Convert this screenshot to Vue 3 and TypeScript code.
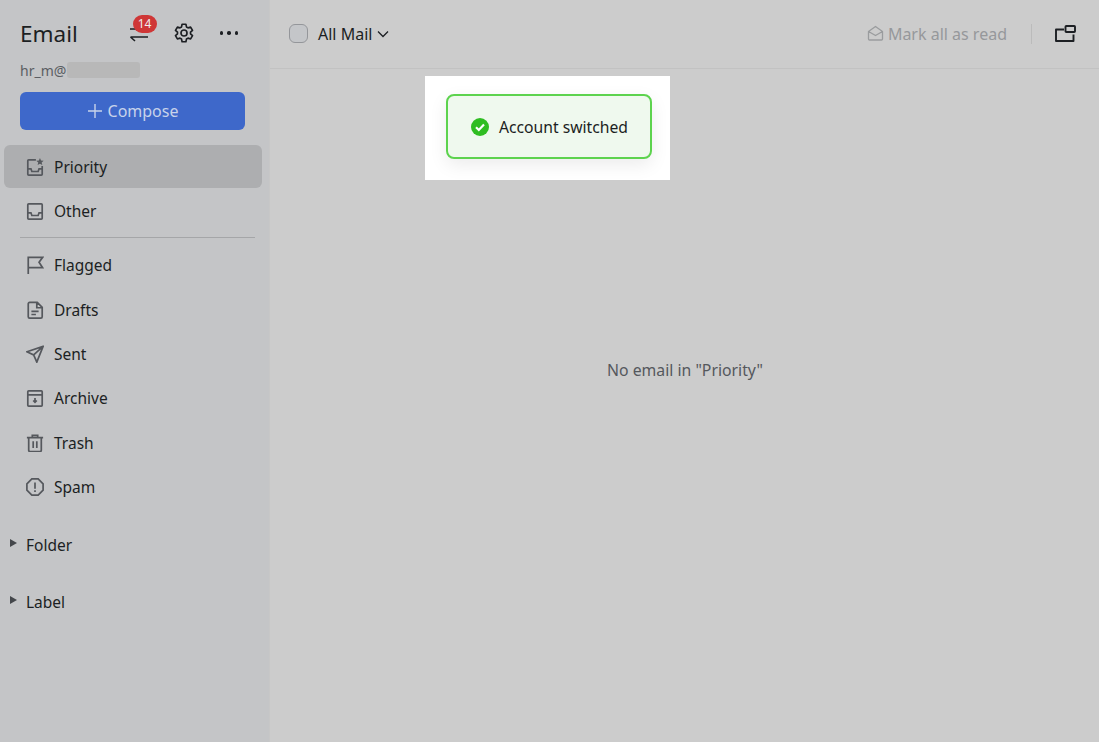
<script setup lang="ts">
const top = [
  { label: 'Priority', icon: 'priority', active: true },
  { label: 'Other', icon: 'inbox', active: false },
]
const rest = [
  { label: 'Flagged', icon: 'flag' },
  { label: 'Drafts', icon: 'draft' },
  { label: 'Sent', icon: 'sent' },
  { label: 'Archive', icon: 'archive' },
  { label: 'Trash', icon: 'trash' },
  { label: 'Spam', icon: 'spam' },
]
const paths: Record<string, string> = {
  priority: 'M11 2H3a1 1 0 0 0-1 1v15a1 1 0 0 0 1 1h14a1 1 0 0 0 1-1V9M2 12h3.500l1 3h7l1-3H18',
  inbox: 'M3 2h14a1 1 0 0 1 1 1v15a1 1 0 0 1-1 1H3a1 1 0 0 1-1-1V3a1 1 0 0 1 1-1zM2 12h3.500l1 3h7l1-3H18',
  flag: 'M2.500 20V1.500h16l-4 5.500 4 6H2.500',
  draft: 'M4 1.500h8.500L18 7v10.500a1.500 1.500 0 0 1-1.500 1.500H4a1.500 1.500 0 0 1-1.500-1.500V3A1.500 1.500 0 0 1 4 1.500zM12 1.500V7.500h6M6 11.500h8M6 15h5',
  sent: 'M19 1.500 1 7.500l7.500 3.500 3.500 8zM19 1.500 8.500 11',
  archive: 'M3 2h14a1 1 0 0 1 1 1v15a1 1 0 0 1-1 1H3a1 1 0 0 1-1-1V3a1 1 0 0 1 1-1zM2 6.500h16M10 10v4.500M8 12.800l2 2 2-2',
  trash: 'M7 3.500V1.500h6v2M1 4h18M3 4v14a1.500 1.500 0 0 0 1.500 1.500h11A1.500 1.500 0 0 0 17 18V4M8 8v7.500M12 8v7.500',
  spam: 'M6.500 1h7L19 6.500v7L13.500 19h-7L1 13.500v-7zM10 5v7M10 13.500V15.500',
}
</script>

<template>
  <div class="app">
    <aside class="sidebar">
      <header class="brand">
        <h1 class="title">Email</h1>
        <div class="tools">
          <span class="switch">
            <svg width="22" height="22" viewBox="0 0 22 22" fill="none" stroke="#1c1f23" stroke-width="1.600">
              <path d="M1 7h18M19 15H1.500M1.500 15l4.500 4" />
            </svg>
            <span class="badge">14</span>
          </span>
          <svg class="gear" width="22" height="22" viewBox="0 0 24 24" fill="none" stroke="#1c1f23" stroke-width="1.800" stroke-linejoin="round">
            <circle cx="12" cy="12" r="3.300" />
            <path d="M9.900 2.500h4.200l.6 2.900 1.700 1 2.800-.9 2.100 3.600-2.200 2 0 1.800 2.200 2-2.100 3.600-2.800-.9-1.700 1-.6 2.900H9.900l-.6-2.900-1.700-1-2.800.9-2.100-3.600 2.200-2 0-1.800-2.200-2 2.100-3.600 2.800.9 1.700-1z" />
          </svg>
          <span class="dots"><i></i><i></i><i></i></span>
        </div>
      </header>
      <div class="account">
        <span>hr_m@</span><span class="masked"></span>
      </div>
      <div class="compose-wrap">
        <button class="compose">
          <svg width="16" height="16" viewBox="0 0 16 16" stroke="currentColor" stroke-width="1.400"><path d="M8 1v14M1 8h14" /></svg>
          <span>Compose</span>
        </button>
      </div>
      <nav class="nav first">
        <a v-for="item in top" :key="item.label" class="item" :class="{ active: item.active }">
          <svg class="icon" viewBox="0 0 20 20" fill="none">
            <path :d="paths[item.icon]" />
            <path v-if="item.icon === 'priority'" class="star" d="M15.500 0l1.200 2.700 2.900.3-2.200 1.900.7 2.900-2.600-1.500-2.600 1.500.7-2.900L11.400 3l2.900-.3z" />
          </svg>
          <span>{{ item.label }}</span>
        </a>
      </nav>
      <div class="rule"></div>
      <nav class="nav second">
        <a v-for="item in rest" :key="item.label" class="item">
          <svg class="icon" viewBox="0 0 20 20" fill="none"><path :d="paths[item.icon]" /></svg>
          <span>{{ item.label }}</span>
        </a>
      </nav>
      <div class="groups">
        <div class="group"><span class="caret"></span><span>Folder</span></div>
        <div class="group"><span class="caret"></span><span>Label</span></div>
      </div>
    </aside>

    <main class="main">
      <header class="toolbar">
        <span class="check"></span>
        <span class="filter">All Mail</span>
        <svg class="chev" width="12" height="8" viewBox="0 0 12 8" fill="none" stroke="#1c1f23" stroke-width="1.300"><path d="M1 1.500l5 5 5-5" /></svg>
        <div class="spacer"></div>
        <span class="mark">
          <svg width="17" height="17" viewBox="0 0 17 17" fill="none" stroke="#9a9c9e" stroke-width="1.300" stroke-linejoin="round">
            <path d="M1.500 6.500 8.500 1.500l7 5v7.500a1 1 0 0 1-1 1h-12a1 1 0 0 1-1-1zM1.500 6.500l7 4 7-4" />
          </svg>
          <span>Mark all as read</span>
        </span>
        <span class="sep"></span>
        <svg class="win" width="21" height="17" viewBox="0 0 21 17" fill="none" stroke="#1c1f23" stroke-width="1.900" stroke-linejoin="round">
          <path d="M9 4.500H1v11.500h17.500V9.500" />
          <rect x="10.500" y="1" width="9.500" height="6" rx=".8" />
        </svg>
      </header>
      <div class="empty">No email in "Priority"</div>
    </main>

    <div class="toast-box">
      <div class="toast">
        <svg width="18" height="18" viewBox="0 0 18 18">
          <circle cx="9" cy="9" r="9" fill="#2fbd22" />
          <path d="M5 9.300l2.800 2.700L13 6.600" fill="none" stroke="#fff" stroke-width="2.200" />
        </svg>
        <span>Account switched</span>
      </div>
    </div>
  </div>
</template>

<style>
html, body { margin: 0; padding: 0; }
</style>

<style scoped>
.app {
  position: relative;
  display: flex;
  width: 1099px;
  height: 742px;
  overflow: hidden;
  background: #cccccc;
  color: #1c1f23;
  font-family: "Noto Sans", "Open Sans", sans-serif;
  font-size: 16px;
}
.sidebar {
  flex: 0 0 270px;
  background: #c4c5c7;
  border-right: 1px solid #c7c7c7;
  box-sizing: border-box;
}
.brand {
  display: flex;
  align-items: center;
  justify-content: space-between;
  height: 28px;
  margin-top: 20px;
  padding: 0 31px 0 20px;
}
.title {
  margin: 0;
  font-size: 22.500px;
  font-weight: 400;
  line-height: 28px;
}
.tools { display: flex; align-items: center; gap: 24px; margin-top: -2px; }
.switch { position: relative; display: block; width: 22px; height: 22px; }
.switch svg { display: block; }
.badge {
  position: absolute;
  left: 4px;
  top: -7px;
  width: 24px;
  height: 18px;
  border-radius: 9px;
  background: #cf3737;
  color: #eee;
  font-size: 12px;
  line-height: 18px;
  text-align: center;
}
.gear { display: block; margin-left: -2px; }
.dots { display: flex; gap: 4px; margin-left: 1px; }
.dots i { width: 3.500px; height: 3.500px; border-radius: 50%; background: #1c1f23; }
.account {
  display: flex;
  align-items: center;
  height: 16px;
  margin-top: 14px;
  padding-left: 20px;
  font-size: 14px;
  color: #5b5e63;
}
.masked {
  width: 73px;
  height: 16px;
  margin-left: 1px;
  border-radius: 3px;
  background: #b8b8b8;
}
.compose-wrap { padding: 14px 24px 0 20px; }
.compose {
  display: flex;
  align-items: center;
  justify-content: center;
  gap: 5px;
  width: 100%;
  height: 38px;
  padding: 0;
  border: 0;
  border-radius: 6px;
  background: #3e68ca;
  color: #c8d3ea;
  font: inherit;
  font-size: 16px;
}
.nav { display: flex; flex-direction: column; }
.nav.first { margin-top: 15px; padding: 0 7px 0 4px; gap: 1px; }
.nav.second { padding: 0 7px 0 4px; margin-top: 5px; }
.item {
  display: flex;
  align-items: center;
  gap: 10px;
  height: 43px;
  padding-left: 22px;
  border-radius: 6px;
  font-size: 15.500px;
}
.second .item { height: 44.400px; }
.active { background: #adaeb0; }
.icon {
  width: 18px;
  height: 18px;
  flex: none;
  stroke: #55585d;
  stroke-width: 1.900;
}
.star { fill: #55585d; stroke: none; }
.rule {
  height: 1px;
  margin: 5px 14px 0 20px;
  background: #a5a6a8;
}
.groups { margin-top: 7px; }
.group {
  display: flex;
  align-items: center;
  height: 57px;
  padding-left: 10px;
  gap: 9px;
  font-size: 15.500px;
}
.caret {
  width: 0;
  height: 0;
  border-left: 7px solid #44474b;
  border-top: 4.500px solid transparent;
  border-bottom: 4.500px solid transparent;
  margin-top: -3px;
}
.main { flex: 1; display: flex; flex-direction: column; min-width: 0; }
.toolbar {
  display: flex;
  align-items: center;
  box-sizing: border-box;
  height: 69px;
  padding: 0 23px 1px 19px;
  border-bottom: 1px solid #c2c2c2;
}
.check {
  width: 17px;
  height: 17px;
  border: 1.500px solid #94969a;
  border-radius: 6px;
  background: #c4c6c9;
}
.filter { margin-left: 10px; font-size: 16px; }
.chev { margin-left: 5px; }
.spacer { flex: 1; }
.mark {
  display: flex;
  align-items: center;
  gap: 4px;
  color: #96989b;
  font-size: 16px;
}
.sep { width: 1px; height: 20px; margin: 0 23px 0 24px; background: #bbbbbb; }
.empty {
  flex: 1;
  display: flex;
  align-items: flex-start;
  justify-content: center;
  padding-top: 290px;
  padding-left: 1px;
  color: #55585d;
  font-size: 15.800px;
  line-height: 22px;
}
.toast-box {
  position: absolute;
  left: 425px;
  top: 76px;
  width: 245px;
  height: 104px;
  background: #ffffff;
}
.toast {
  position: absolute;
  left: 21px;
  top: 18px;
  display: flex;
  align-items: center;
  gap: 10px;
  box-sizing: border-box;
  width: 206px;
  height: 65px;
  padding-left: 23px;
  border: 2px solid #5dd34e;
  border-radius: 8px;
  background: #eff9ee;
  box-shadow: 0 6px 18px rgba(0, 0, 0, .08);
  font-size: 15.700px;
  white-space: nowrap;
}
</style>
